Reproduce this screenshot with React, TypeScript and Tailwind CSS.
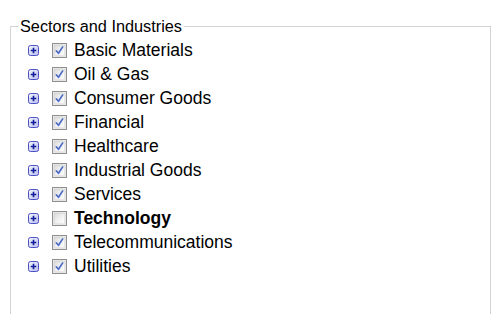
const sectors = [
  { name: "Basic Materials", checked: true },
  { name: "Oil & Gas", checked: true },
  { name: "Consumer Goods", checked: true },
  { name: "Financial", checked: true },
  { name: "Healthcare", checked: true },
  { name: "Industrial Goods", checked: true },
  { name: "Services", checked: true },
  { name: "Technology", checked: false },
  { name: "Telecommunications", checked: true },
  { name: "Utilities", checked: true },
];

function ExpandIcon() {
  return (
    <svg width="11" height="11" viewBox="0 0 11 11" className="shrink-0">
      <defs>
        <linearGradient id="exp" x1="0" y1="0" x2="1" y2="1">
          <stop offset="0" stopColor="#f4f5ff" />
          <stop offset="1" stopColor="#b9bff0" />
        </linearGradient>
      </defs>
      <rect x="0.5" y="0.5" width="10" height="10" rx="2" fill="url(#exp)" stroke="#4a52c4" />
      <path d="M2.7 5.5h5.6M5.5 2.7v5.6" stroke="#141e96" strokeWidth="1.6" />
    </svg>
  );
}

function CheckBox({ checked }: { checked: boolean }) {
  return (
    <svg width="15" height="15" viewBox="0 0 15 15" className="shrink-0">
      <defs>
        <linearGradient id="chk" x1="0" y1="0" x2="1" y2="1">
          <stop offset="0" stopColor="#d8d8d8" />
          <stop offset="0.5" stopColor="#f0f0f0" />
          <stop offset="1" stopColor="#ffffff" />
        </linearGradient>
      </defs>
      <rect x="0.5" y="0.5" width="14" height="14" fill="#f4f4f4" stroke="#8e8f8f" />
      <rect x="2" y="2" width="11" height="11" fill="url(#chk)" stroke="#c4c4c4" strokeWidth="0.6" />
      {checked && (
        <path d="M4.3 7.8l2.2 2.5 4.2-6.4" fill="none" stroke="#4a6bc8" strokeWidth="1.7" strokeLinecap="round" strokeLinejoin="round" />
      )}
    </svg>
  );
}

export default function App() {
  return (
    <div className="w-[491px] h-[314px] overflow-hidden bg-white font-['Liberation_Sans',Arial,sans-serif] text-black">
      <fieldset className="ml-[10px] mt-[17px] w-[481px] h-[300px] border border-[#d4d4d4]">
        <legend className="ml-[7px] px-[2px] text-[16.3px] leading-[18px]">Sectors and Industries</legend>
        <ul className="pt-[3px]">
          {sectors.map((s) => (
            <li key={s.name} className="flex items-center h-6 pl-[17px]">
              <ExpandIcon />
              <span className="ml-[13px] flex">
                <CheckBox checked={s.checked} />
              </span>
              <span className={`ml-[7px] text-[17.5px] leading-[20px] ${s.checked ? "" : "font-bold"}`}>
                {s.name}
              </span>
            </li>
          ))}
        </ul>
      </fieldset>
    </div>
  );
}
